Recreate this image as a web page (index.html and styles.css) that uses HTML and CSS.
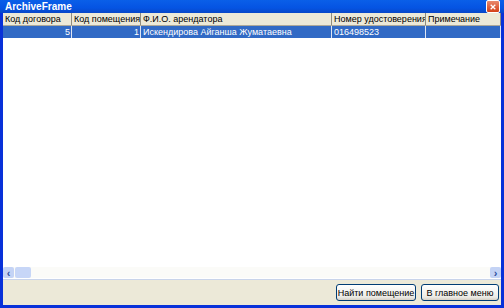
FILE: index.html
```html
<!DOCTYPE html>
<html lang="ru">
<head>
    <meta charset="UTF-8">
    <title>ArchiveFrame</title>
    <link rel="stylesheet" href="styles.css">
</head>
<body>
    <div class="window">
        <div class="titlebar">
            <span class="title">ArchiveFrame</span>
            <span class="close">
                <svg width="13" height="13" viewBox="0 0 13 13">
                    <path d="M3.5 3.5 L9.5 9.5 M9.5 3.5 L3.5 9.5" stroke="#fff" stroke-width="1.6" fill="none"/>
                </svg>
            </span>
        </div>
        <div class="content">
            <div class="grid">
                <div class="row head">
                    <div class="cell c1">Код договора</div>
                    <div class="cell c2">Код помещения</div>
                    <div class="cell c3">Ф.И.О. арендатора</div>
                    <div class="cell c4">Номер удостоверения</div>
                    <div class="cell c5">Примечание</div>
                </div>
                <div class="row selected">
                    <div class="cell c1 num">5</div>
                    <div class="cell c2 num">1</div>
                    <div class="cell c3">Искендирова Айганша Жуматаевна</div>
                    <div class="cell c4">016498523</div>
                    <div class="cell c5"></div>
                </div>
                <div class="empty"></div>
                <div class="hscroll">
                    <span class="arrow">&lsaquo;</span>
                    <span class="thumb"></span>
                    <span class="track"></span>
                    <span class="arrow">&rsaquo;</span>
                </div>
            </div>
            <div class="buttons">
                <button type="button">Найти помещение</button>
                <button type="button">В главное меню</button>
            </div>
        </div>
    </div>
</body>
</html>
```

FILE: styles.css
```css
body {
    margin: 0;
    padding: 0;
    font-family: "Liberation Sans", Arial, sans-serif;
    font-size: 9px;
    background-color: #ece9d8;
}

.window {
    width: 504px;
    height: 308px;
    display: flex;
    flex-direction: column;
    background-color: #0831d9;
}

.titlebar {
    height: 13px;
    display: flex;
    align-items: center;
    justify-content: space-between;
    padding: 0 4px 0 5px;
    background: linear-gradient(#0a5fe8, #0554e3 60%, #0847c8);
}

.title {
    color: #fff;
    font-weight: bold;
    font-size: 10px;
}

.close {
    width: 12px;
    height: 11px;
    display: flex;
    align-items: center;
    justify-content: center;
    background: linear-gradient(#e98a6e, #d44018);
    border: 1px solid #fff;
    border-radius: 2px;
}

.close svg {
    width: 10px;
    height: 10px;
}

.content {
    flex: 1;
    display: flex;
    flex-direction: column;
    margin: 0 3px 3px 3px;
    background-color: #ece9d8;
}

.grid {
    flex: 1;
    display: flex;
    flex-direction: column;
    background-color: #fff;
    border-bottom: 1px solid #c9d4ea;
}

.row {
    display: flex;
    height: 12px;
}

.cell {
    box-sizing: border-box;
    padding: 0 1px 0 2px;
    line-height: 12px;
    white-space: nowrap;
    overflow: hidden;
    border-right: 1px solid #c6c3b6;
}

.head {
    background-color: #ece9d8;
    border-bottom: 1px solid #aca899;
    color: #000;
}

.head .cell {
    border-right: 1px solid #8f8c80;
}

.selected {
    background-color: #316ac5;
    color: #fff;
}

.selected .cell {
    border-right: 1px solid #dfe6f3;
}

.c1 { width: 69px; }
.c2 { width: 69px; }
.c3 { width: 191px; }
.c4 { width: 94px; }
.c5 { width: 75px; border-right: none; }

.num {
    text-align: right;
}

.empty {
    flex: 1;
}

.hscroll {
    height: 11px;
    display: flex;
    align-items: center;
    gap: 1px;
    background-color: #fbfbf8;
    margin-bottom: 1px;
}

.arrow {
    width: 11px;
    height: 11px;
    display: flex;
    align-items: center;
    justify-content: center;
    background-color: #c4d3f5;
    color: #2d4f9e;
    font-weight: bold;
    font-size: 11px;
    border-radius: 2px;
}

.thumb {
    width: 16px;
    height: 11px;
    background-color: #c7d6f7;
    border-radius: 2px;
}

.track {
    flex: 1;
}

.buttons {
    height: 25px;
    display: flex;
    align-items: center;
    justify-content: flex-end;
    gap: 5px;
    padding-right: 2px;
}

button {
    height: 17px;
    padding: 0;
    white-space: nowrap;
    font-family: "Liberation Sans", Arial, sans-serif;
    font-size: 9px;
    color: #000;
    background: linear-gradient(#ffffff, #ecebe6 80%, #d6d0c5);
    border: 1px solid #003c74;
    border-radius: 3px;
}

button:first-child {
    width: 80px;
}

button:last-child {
    width: 78px;
}
```
